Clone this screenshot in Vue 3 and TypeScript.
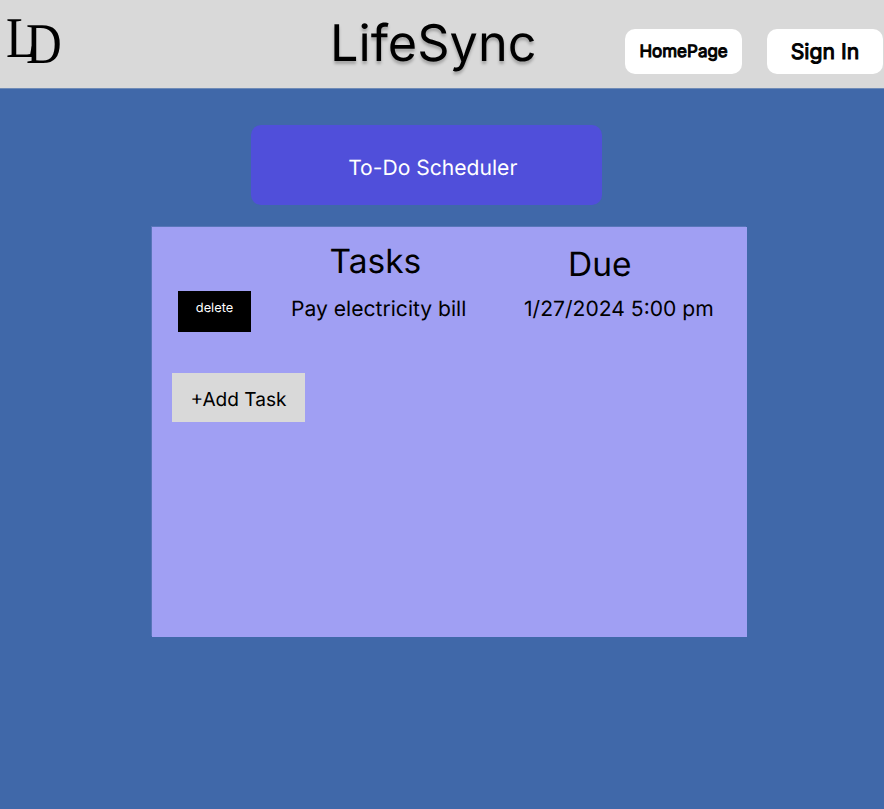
<script setup lang="ts">
interface Task {
  name: string
  due: string
}

const tasks: Task[] = [{ name: 'Pay electricity bill', due: '1/27/2024 5:00 pm' }]
</script>

<template>
  <div class="page">
    <header class="header">
      <div class="logo"><span class="l">L</span><span class="d">D</span></div>
      <h1 class="brand">LifeSync</h1>
      <nav class="nav">
        <button class="nav-btn home">HomePage</button>
        <button class="nav-btn sign">Sign In</button>
      </nav>
    </header>
    <main class="main">
      <h2 class="banner">To-Do Scheduler</h2>
      <section class="panel">
        <div class="row head">
          <span></span>
          <span class="th tasks">Tasks</span>
          <span class="th due">Due</span>
        </div>
        <div v-for="task in tasks" :key="task.name" class="row item">
          <button class="delete">delete</button>
          <span class="name">{{ task.name }}</span>
          <span class="date">{{ task.due }}</span>
        </div>
        <button class="add">+Add Task</button>
      </section>
    </main>
  </div>
</template>

<style>
body {
  margin: 0;
}
</style>

<style scoped>
.page {
  height: 809px;
  overflow: hidden;
  background: #4068a9;
  font-family: Inter, sans-serif;
  color: #000;
  text-rendering: geometricPrecision;
}
button {
  border: 0;
  padding: 0;
  font-family: inherit;
  color: #000;
  text-rendering: inherit;
}
h1,
h2 {
  margin: 0;
  font-weight: 400;
}
span {
  white-space: nowrap;
}
.header {
  display: grid;
  grid-template-columns: 330px 295.4px 258.6px;
  height: 88px;
  background: #d9d9d9;
  box-shadow: 0 1px #6f8bb7;
}
.logo {
  display: flex;
  padding-left: 6px;
  font: 57.5px/58px 'Liberation Serif', serif;
}
.logo span {
  transform: scaleX(0.86);
  transform-origin: left;
}
.l {
  margin-top: 9.5px;
}
.d {
  margin: 16.4px 0 0 -15.2px;
}
.brand {
  padding-top: 11px;
  font-size: 50.4px;
  line-height: 65px;
  text-shadow: 0 3px 3px rgba(0, 0, 0, 0.25);
}
.nav {
  display: flex;
  gap: 25px;
  padding-top: 29px;
}
.nav-btn {
  width: 116.4px;
  height: 44.5px;
  flex: none;
  border-radius: 10px;
  background: #fff;
  -webkit-text-stroke: 1px #000;
}
.home {
  padding-top: 2px;
  font-size: 17px;
}
.sign {
  padding-top: 1px;
  font-size: 21.2px;
}
.main {
  padding: 37px 0 0 152px;
}
.banner {
  width: 350.5px;
  height: 80px;
  margin-left: 99px;
  box-sizing: border-box;
  padding: 4px 0 0 13px;
  border-radius: 10px;
  background: #504fda;
  color: #fff;
  font-size: 21.1px;
  line-height: 80px;
  text-align: center;
}
.panel {
  width: 595px;
  height: 410px;
  margin-top: 22px;
  background: #a09ff3;
  box-shadow: -1px -1px #5876b9;
}
.row {
  display: grid;
  grid-template-columns: 139px 233px 1fr;
}
.head {
  height: 64px;
}
.th {
  font-size: 33.5px;
  line-height: 42px;
}
.tasks {
  padding: 14px 0 0 38.5px;
}
.due {
  padding: 17px 0 0 44px;
}
.item {
  height: 82px;
  font-size: 21.1px;
  line-height: 38px;
}
.delete {
  width: 73px;
  height: 41px;
  margin-left: 26px;
  padding-bottom: 7px;
  background: #000;
  color: #fff;
  font-size: 12.8px;
}
.add {
  display: block;
  width: 133px;
  height: 49px;
  margin-left: 20px;
  padding-top: 2px;
  background: #d9d9d9;
  font-size: 19.1px;
}
</style>
